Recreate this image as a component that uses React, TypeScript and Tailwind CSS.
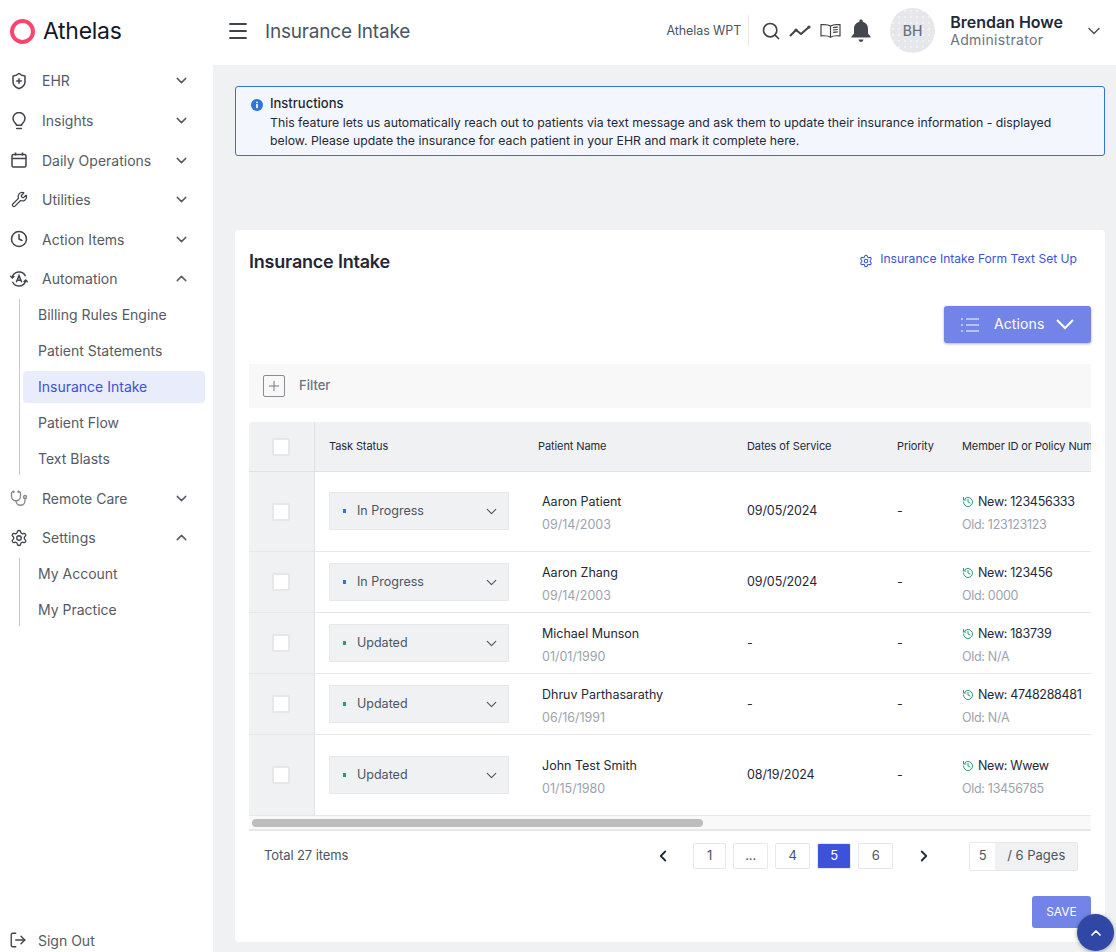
import React from 'react';
import {
  ChevronDown,
  ChevronUp,
  ChevronLeft,
  ChevronRight,
  ShieldPlus,
  Wrench,
  Clock,
  Stethoscope,
  Settings,
  LogOut,
  Search,
  Menu,
  History,
  Plus,
} from 'lucide-react';

const BulbIcon = () => (
  <svg width="14" height="18" viewBox="0 0 14 18" fill="none" stroke="#3f434b" strokeWidth="1.5" strokeLinecap="round">
    <path d="M4.500 13.200c0-1.500-3.500-3-3.500-6.700a6 6 0 0 1 12 0c0 3.700-3.500 5.200-3.500 6.700z" />
    <path d="M4.700 16.500h4.600" />
  </svg>
);

const CalendarIcon = () => (
  <svg width="16" height="16" viewBox="0 0 16 16" fill="none" stroke="#3f434b" strokeWidth="1.5">
    <rect x="1" y="2.500" width="14" height="12.500" rx="1.500" />
    <path d="M1 6.500h14M4.500 0.500v3M11.500 0.500v3" />
  </svg>
);

const AutomationIcon = () => (
  <svg width="18" height="18" viewBox="0 0 18 18" fill="none" stroke="#3f434b" strokeWidth="1.4">
    <path d="M15.500 6.200A7 7 0 0 0 2.200 7.800M2.500 11.800A7 7 0 0 0 15.800 10.200" />
    <path d="M0.300 5.800l1.900 2.200 2.200-1.900M17.700 12.200l-1.900-2.200-2.200 1.900" />
    <path d="M6.300 12.300 9 5.600l2.700 6.700M7.300 10.200h3.400" strokeWidth="1.500" />
  </svg>
);

const TrendIcon = () => (
  <svg width="22" height="14" viewBox="0 0 22 14" fill="none" stroke="#3f434b" strokeWidth="2" strokeLinejoin="round">
    <path d="M1 12l6-6 5 4 8-7" />
    <circle cx="7" cy="6" r="0.600" />
    <circle cx="20" cy="3" r="0.600" />
  </svg>
);

const BookIcon = () => (
  <svg width="21" height="16" viewBox="0 0 21 16" fill="none" stroke="#3f434b" strokeWidth="1.200">
    <path d="M10.500 3C8.500 1.600 5 1.300 1 1.700v11.200c4-.4 7.500-.1 9.500 1.300 2-1.400 5.500-1.700 9.500-1.300V1.700c-4-.4-7.500-.1-9.500 1.300z" />
    <path d="M10.500 3v11.200" />
    <path d="M13 4.600c1.500-.4 3-.5 4.800-.5M13 7c1.500-.4 3-.5 4.800-.5M13 9.400c1.500-.4 3-.5 4.800-.5" />
  </svg>
);

const BellIcon = () => (
  <svg width="22" height="24" viewBox="0 0 22 24" fill="#434750">
    <path d="M11 0.500c1 0 1.700.7 1.700 1.700v.6c3.300.8 5.300 3.600 5.300 7v4.700l2.500 3v1H1.500v-1l2.500-3V9.800c0-3.400 2-6.200 5.300-7v-.6C9.300 1.200 10 .5 11 .5z" />
    <path d="M8.600 20.500h4.800a2.400 2.400 0 0 1-4.800 0z" />
  </svg>
);

const InfoIcon = () => (
  <svg width="12" height="12" viewBox="0 0 12 12">
    <circle cx="6" cy="6" r="6" fill="#2f74d9" />
    <rect x="5.200" y="5" width="1.600" height="4.200" fill="#fff" />
    <rect x="5.200" y="2.700" width="1.600" height="1.500" fill="#fff" />
  </svg>
);

const ListIcon = () => (
  <svg width="18" height="14" viewBox="0 0 18 14" fill="none" stroke="#fff" strokeWidth="1">
    <path d="M5 1h13M5 7h13M5 13h13" />
    <path d="M0 1h2M0 7h2M0 13h2" />
  </svg>
);

const WideChevron = () => (
  <svg width="18" height="11" viewBox="0 0 18 11" fill="none" stroke="#fff" strokeWidth="2">
    <path d="M1 1l8 8 8-8" />
  </svg>
);

type NavItem = { label: string; icon: React.ReactNode; open?: boolean; children?: string[] };

const ic = 'w-[18px] h-[18px] text-[#3f434b]';

const navItems: NavItem[] = [
  { label: 'EHR', icon: <ShieldPlus className={ic} strokeWidth={2} /> },
  { label: 'Insights', icon: <BulbIcon /> },
  { label: 'Daily Operations', icon: <CalendarIcon /> },
  { label: 'Utilities', icon: <Wrench className="w-[17px] h-[17px] text-[#3f434b]" strokeWidth={1.8} /> },
  { label: 'Action Items', icon: <Clock className={ic} strokeWidth={2} /> },
  {
    label: 'Automation',
    icon: <AutomationIcon />,
    open: true,
    children: ['Billing Rules Engine', 'Patient Statements', 'Insurance Intake', 'Patient Flow', 'Text Blasts'],
  },
  { label: 'Remote Care', icon: <Stethoscope className="w-[19px] h-[19px] text-[#85888e]" strokeWidth={1.8} /> },
  { label: 'Settings', icon: <Settings className={ic} strokeWidth={1.8} />, open: true, children: ['My Account', 'My Practice'] },
];

const rows = [
  { status: 'In Progress', dot: 'bg-[#2f74d9]', name: 'Aaron Patient', dob: '09/14/2003', dos: '09/05/2024', fresh: '123456333', old: '123123123', h: 'h-[80px]', nudge: 'mb-[1px]' },
  { status: 'In Progress', dot: 'bg-[#2f74d9]', name: 'Aaron Zhang', dob: '09/14/2003', dos: '09/05/2024', fresh: '123456', old: '0000', h: 'h-[61px]', nudge: '' },
  { status: 'Updated', dot: 'bg-[#2a9d6f]', name: 'Michael Munson', dob: '01/01/1990', dos: '-', fresh: '183739', old: 'N/A', h: 'h-[61px]', nudge: '' },
  { status: 'Updated', dot: 'bg-[#2a9d6f]', name: 'Dhruv Parthasarathy', dob: '06/16/1991', dos: '-', fresh: '4748288481', old: 'N/A', h: 'h-[61px]', nudge: '' },
  { status: 'Updated', dot: 'bg-[#2a9d6f]', name: 'John Test Smith', dob: '01/15/1980', dos: '08/19/2024', fresh: 'Wwew', old: '13456785', h: 'h-[81px]', nudge: '' },
];

const gridCols = 'grid grid-cols-[66px_209px_209px_150px_65px_143px]';

const Checkbox = () => <div className="w-[18px] h-[18px] mr-[1px] bg-white border-2 border-[#e6e7ea] rounded-[2px]" />;

const Sidebar = () => (
  <aside className="w-[213px] shrink-0 bg-white flex flex-col h-full">
    <div className="h-[61.2px] shrink-0 flex items-center pl-[10px] pt-[1px]">
      <div className="w-[25px] h-[25px] rounded-full border-[4px] border-[#fb4570]" />
      <span className="ml-[8px] text-[23px] leading-none text-[#111827] tracking-[-0.3px]">Athelas</span>
    </div>
    <nav className="flex flex-col">
      {navItems.map((item) => (
        <div key={item.label}>
          <div className="h-[39.6px] flex items-center">
            <div className="w-[18px] ml-[10px] flex justify-center">{item.icon}</div>
            <span className="ml-[14px] text-[14px] text-[#565a63]">{item.label}</span>
            <span className="ml-auto mr-[23px]">
              {item.open ? (
                <ChevronUp className="w-[17px] h-[17px] text-[#565a63]" strokeWidth={2} />
              ) : (
                <ChevronDown className="w-[17px] h-[17px] text-[#565a63]" strokeWidth={2} />
              )}
            </span>
          </div>
          {item.children && (
            <div className="ml-[19px] border-l border-[#c9cacd] pl-[3px] flex flex-col gap-[4px] mb-[3.8px]">
              {item.children.map((c) => (
                <div
                  key={c}
                  className={
                    c === 'Insurance Intake'
                      ? 'h-[32px] w-[182px] rounded-[4px] flex items-center px-[15px] text-[14px] bg-[#e9ecfa] text-[#3b52d9]'
                      : 'h-[32px] w-[182px] rounded-[4px] flex items-center px-[15px] text-[14px] text-[#565a63]'
                  }
                >
                  {c}
                </div>
              ))}
            </div>
          )}
        </div>
      ))}
    </nav>
    <div className="mt-auto h-[22px] mb-[1px] flex items-center pl-[9px]">
      <LogOut className="w-[18px] h-[18px] text-[#3f434b]" strokeWidth={1.8} />
      <span className="ml-[11px] text-[14px] text-[#565a63]">Sign Out</span>
    </div>
  </aside>
);

const Header = () => (
  <header className="h-[65px] shrink-0 bg-white flex items-center pl-[13px] pb-[4px]">
    <Menu className="w-[24px] h-[24px] text-[#3f434b]" strokeWidth={1.8} />
    <h1 className="ml-[15px] pt-[4px] text-[19px] font-normal text-[#4b5563] tracking-[-0.2px]">Insurance Intake</h1>
    <span className="ml-auto pt-[2px] text-[12.5px] text-[#4b5563] tracking-[-0.1px]">Athelas WPT</span>
    <div className="ml-[7px] w-px h-[31px] bg-[#e5e7eb]" />
    <Search className="ml-[12px] w-[20px] h-[20px] text-[#3f434b]" strokeWidth={2} />
    <span className="ml-[8px] flex"><TrendIcon /></span>
    <span className="ml-[9px] flex"><BookIcon /></span>
    <span className="ml-[9px] flex"><BellIcon /></span>
    <div className="ml-[18px] w-[45px] h-[45px] rounded-full bg-[#e6e7ea] bg-[radial-gradient(#f1f2f4_1px,transparent_1px)] bg-[length:6px_6px] flex items-center justify-center text-[14px] font-medium text-[#6b7280]">
      BH
    </div>
    <div className="ml-[15px] flex flex-col">
      <span className="text-[16px] leading-[18px] font-semibold text-[#1f2937]">Brendan Howe</span>
      <span className="text-[14px] leading-[17px] text-[#6b7280] tracking-[0.35px]">Administrator</span>
    </div>
    <ChevronDown className="ml-[21px] mr-[12px] w-[20px] h-[20px] text-[#565a63]" strokeWidth={2} />
  </header>
);

const Table = () => (
  <div className="mt-[14px] overflow-hidden">
    <div className={`${gridCols} h-[50px] bg-[#f0f1f3] border-b border-[#e0e1e4] rounded-t-[4px] text-[11px] tracking-[-0.1px] text-[#1f2937] items-center`}>
      <div className="h-full border-r border-[#e0e1e4] flex items-center justify-center">
        <Checkbox />
      </div>
      <div className="pl-[14px]">Task Status</div>
      <div className="pl-[14px]">Patient Name</div>
      <div className="pl-[14px]">Dates of Service</div>
      <div className="pl-[14px]">Priority</div>
      <div className="pl-[14px] whitespace-nowrap overflow-hidden">Member ID or Policy Number</div>
    </div>
    {rows.map((r) => (
      <div key={r.name} className={`${gridCols} ${r.h} border-b border-[#e5e7eb] items-center text-[12.5px] text-[#1f2937]`}>
        <div className="h-full bg-[#f0f1f3] border-r border-[#e0e1e4] flex items-center justify-center">
          <Checkbox />
        </div>
        <div className={`pl-[14px] ${r.nudge}`}>
          <div className="w-[180px] h-[38px] bg-[#f0f1f3] border border-[#e5e7eb] rounded-[1px] flex items-center pl-[13px] pr-[8px]">
            <span className={`w-[3px] h-[4px] ${r.dot}`} />
            <span className="ml-[11px] text-[12.5px] text-[#4b5563]">{r.status}</span>
            <ChevronDown className="ml-auto w-[17px] h-[17px] text-[#4b5563]" strokeWidth={1.6} />
          </div>
        </div>
        <div className="pl-[18px] pt-[4px] flex flex-col gap-[5px]">
          <span className="leading-[18px]">{r.name}</span>
          <span className="leading-[18px] text-[#9ca3af]">{r.dob}</span>
        </div>
        <div className="pl-[14px] tracking-[-0.1px]">{r.dos}</div>
        <div className="pl-[14px]">-</div>
        <div className="pl-[14px] pt-[4px] flex flex-col gap-[5px] whitespace-nowrap tracking-[-0.3px]">
          <span className="leading-[18px] flex items-center">
            <History className="w-[12px] h-[12px] text-[#2a9d6f] mr-[4px]" strokeWidth={2} />
            New: {r.fresh}
          </span>
          <span className="leading-[18px] text-[#9ca3af]">Old: {r.old}</span>
        </div>
      </div>
    ))}
    <div className="h-[15px] bg-[#f9f9f9] border-b-2 border-[#e5e7eb] pl-[3px] pt-[3px]">
      <div className="w-[451px] h-[8px] rounded-full bg-[#bdbdbd]" />
    </div>
  </div>
);

const pageBtn = 'h-[26px] flex items-center justify-center border border-[#e5e7eb] rounded-[2px] text-[13px] text-[#4b5563]';

const Pagination = () => (
  <div className="h-[50px] flex items-center pl-[15px] text-[13px]">
    <span className="text-[#4b5563] tracking-[-0.1px]">Total 27 items</span>
    <ChevronLeft className="ml-[306px] w-[18px] h-[18px] text-[#1f2937]" strokeWidth={2.4} />
    <div className="ml-[21px] flex gap-[7px]">
      <div className={`${pageBtn} w-[33px]`}>1</div>
      <div className={`${pageBtn} w-[35px]`}>...</div>
      <div className={`${pageBtn} w-[35px]`}>4</div>
      <div className={`${pageBtn} w-[34px] bg-[#3b52d9] border-[#3b52d9] text-white`}>5</div>
      <div className={`${pageBtn} w-[35px]`}>6</div>
    </div>
    <ChevronRight className="ml-[22px] w-[18px] h-[18px] text-[#1f2937]" strokeWidth={2.4} />
    <div className="ml-[36px] w-[109px] h-[29px] flex border border-[#e5e7eb] rounded-[2px]">
      <div className="w-[25px] flex items-center justify-center text-[#4b5563]">5</div>
      <div className="flex-1 bg-[#f0f1f3] flex items-center justify-center text-[#4b5563]">/ 6 Pages</div>
    </div>
  </div>
);

const Card = () => (
  <section className="mt-[74px] h-[712px] bg-white rounded-[4px] px-[14px] flex flex-col">
    <div className="h-[61px] flex items-center pl-0 pr-[14px]">
      <h2 className="pt-[2px] text-[18px] font-semibold text-[#1f2937] tracking-[-0.2px]">Insurance Intake</h2>
      <Settings className="ml-auto w-[14px] h-[14px] text-[#3b52d9]" strokeWidth={1.8} />
      <span className="ml-[7px] pb-[2px] text-[12.1px] text-[#3b52d9]">Insurance Intake Form Text Set Up</span>
    </div>
    <div className="mt-[15px] flex justify-end">
      <button className="w-[147px] h-[37px] bg-[#7384e8] rounded-[3px] shadow-[0_1px_3px_rgba(0,0,0,0.3)] flex items-center pl-[17px] text-white">
        <ListIcon />
        <span className="ml-[15px] pb-[2px] text-[14px] tracking-[0.1px]">Actions</span>
        <span className="ml-[12px] flex"><WideChevron /></span>
      </button>
    </div>
    <div className="mt-[21px] h-[44px] bg-[#f8f8f8] flex items-center pl-[14px]">
      <div className="w-[22px] h-[22px] border border-[#8a8d92] rounded-[2px] flex items-center justify-center">
        <Plus className="w-[16px] h-[16px] text-[#6b7280]" strokeWidth={1.4} />
      </div>
      <span className="ml-[14px] text-[13px] font-medium text-[#6b7280]">Filter</span>
    </div>
    <Table />
    <Pagination />
    <div className="mt-[15px] flex justify-end">
      <button className="w-[59px] h-[32px] bg-[#7384e8] rounded-[3px] text-[12px] text-white">SAVE</button>
    </div>
  </section>
);

export default function App() {
  return (
    <div className="relative w-[1116px] h-[952px] overflow-hidden flex bg-[#f0f1f3] font-['Inter',sans-serif]">
      <Sidebar />
      <div className="flex-1 flex flex-col min-w-0">
        <Header />
        <main className="flex-1 pl-[22px] pr-[11px] pt-[21px]">
          <div className="h-[70px] bg-[#f3f6fc] border border-[#2f74d9] rounded-[3px] pl-[15px] pr-[30px] pt-[7px] flex">
            <span className="mt-[5px]"><InfoIcon /></span>
            <div className="ml-[7px] flex-1">
              <div className="text-[13px] leading-[18px] font-medium text-[#1f2937]">Instructions</div>
              <p className="mt-[2px] text-[12.27px] leading-[17.6px] text-[#1f2937]">
                This feature lets us automatically reach out to patients via text message and ask them to update their insurance information - displayed below. Please update the insurance for each patient in your EHR and mark it complete here.
              </p>
            </div>
          </div>
          <Card />
        </main>
      </div>
      <button className="absolute left-[1077px] top-[914px] w-[37px] h-[37px] rounded-full bg-[#3147a6] shadow-[0_1px_4px_rgba(0,0,0,0.35)] flex items-center justify-center">
        <ChevronUp className="w-[16px] h-[16px] text-white" strokeWidth={2.6} />
      </button>
    </div>
  );
}
